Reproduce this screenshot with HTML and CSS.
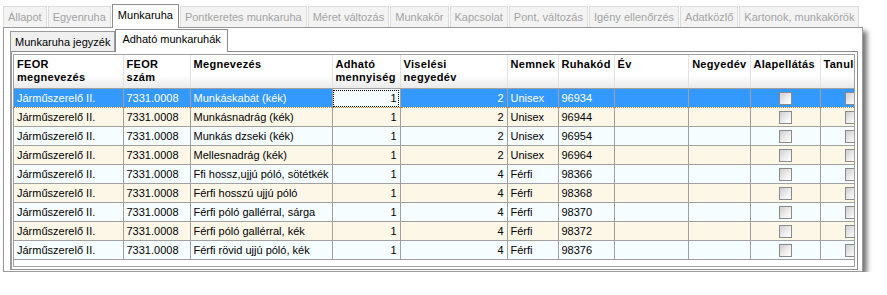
FILE: index.html
```html
<!DOCTYPE html>
<html lang="hu">

<head>
    <meta charset="UTF-8">
    <title>Munkaruha</title>
    <link rel="stylesheet" href="styles.css">
</head>

<body>
    <div class="window">
        <div class="tabs">
            <div class="tab">Állapot</div>
            <div class="tab">Egyenruha</div>
            <div class="tab active">Munkaruha</div>
            <div class="tab">Pontkeretes munkaruha</div>
            <div class="tab">Méret változás</div>
            <div class="tab">Munkakör</div>
            <div class="tab">Kapcsolat</div>
            <div class="tab">Pont, változás</div>
            <div class="tab">Igény ellenőrzés</div>
            <div class="tab">Adatközlő</div>
            <div class="tab">Kartonok, munkakörök</div>
        </div>

        <div class="panel">
            <div class="subtabs">
                <div class="subtab">Munkaruha jegyzék</div>
                <div class="subtab active">Adható munkaruhák</div>
            </div>

            <div class="page">
                <div class="grid">
                    <table>
                        <colgroup>
                            <col style="width: 109px">
                            <col style="width: 67px">
                            <col style="width: 142px">
                            <col style="width: 68px">
                            <col style="width: 107px">
                            <col style="width: 51px">
                            <col style="width: 56px">
                            <col style="width: 74px">
                            <col style="width: 62px">
                            <col style="width: 70px">
                            <col style="width: 62px">
                        </colgroup>
                        <thead>
                            <tr>
                                <th>FEOR<br>megnevezés</th>
                                <th>FEOR<br>szám</th>
                                <th>Megnevezés</th>
                                <th>Adható<br>mennyiség</th>
                                <th>Viselési<br>negyedév</th>
                                <th>Nemnek</th>
                                <th>Ruhakód</th>
                                <th>Év</th>
                                <th class="right">Negyedév</th>
                                <th>Alapellátás</th>
                                <th>Tanuló</th>
                            </tr>
                        </thead>
                        <tbody id="rows"></tbody>
                    </table>
                </div>
            </div>
        </div>
    </div>

    <script>
        let rows = [
            ['Munkáskabát (kék)', 2, 'Unisex', '96934'],
            ['Munkásnadrág (kék)', 2, 'Unisex', '96944'],
            ['Munkás dzseki (kék)', 2, 'Unisex', '96954'],
            ['Mellesnadrág (kék)', 2, 'Unisex', '96964'],
            ['Ffi hossz,ujjú póló, sötétkék', 4, 'Férfi', '98366'],
            ['Férfi hosszú ujjú póló', 4, 'Férfi', '98368'],
            ['Férfi póló gallérral, sárga', 4, 'Férfi', '98370'],
            ['Férfi póló gallérral, kék', 4, 'Férfi', '98372'],
            ['Férfi rövid ujjú póló, kék', 4, 'Férfi', '98376']
        ];

        let body = document.getElementById('rows');
        let html = '';

        // sorok felépítése
        rows.forEach(function (r, i) {
            let cls = i === 0 ? 'selected' : (i % 2 === 0 ? 'odd' : 'even');
            let first = i === 0 ? ' class="right focus"' : ' class="right"';
            html += `<tr class="${cls}">
                <td>Járműszerelő II.</td>
                <td>7331.0008</td>
                <td>${r[0]}</td>
                <td${first}>1</td>
                <td class="right">${r[1]}</td>
                <td>${r[2]}</td>
                <td>${r[3]}</td>
                <td></td>
                <td></td>
                <td class="center"><span class="check"></span></td>
                <td class="center"><span class="check"></span></td>
            </tr>`;
        });

        body.innerHTML = html;
    </script>
</body>

</html>
```

FILE: styles.css
```css
body {
    margin: 0;
    padding: 0;
    background: #fff;
    font-family: "Liberation Sans", Arial, sans-serif;
    font-size: 11px;
    color: #000;
}

.window {
    width: 860px;
    padding: 5px 0 0 3px;
}

.tabs {
    display: flex;
    align-items: flex-end;
    height: 22px;
}

.tab {
    height: 20px;
    line-height: 20px;
    padding: 0 4px;
    margin-right: 1px;
    background: #f3f3f3;
    border: 1px solid #dcdcdc;
    border-bottom: none;
    color: #a3a3a3;
    white-space: nowrap;
}

.tab.active {
    position: relative;
    height: 23px;
    line-height: 21px;
    padding: 0 5px;
    background: #fff;
    border-color: #8c8c8c;
    color: #000;
    margin-bottom: -1px;
    z-index: 1;
}

.panel {
    height: 243px;
    border: 1px solid #9a9a9a;
    background: #fff;
    box-shadow: 4px 4px 5px rgba(0, 0, 0, 0.55);
    padding: 0 4px 0 6px;
}

.subtabs {
    display: flex;
    align-items: flex-end;
    height: 23px;
}

.subtab {
    height: 19px;
    line-height: 20px;
    padding: 0 4px;
    background: #f0f0f0;
    border: 1px solid #9a9a9a;
    border-bottom: none;
    white-space: nowrap;
}

.subtab.active {
    position: relative;
    height: 22px;
    line-height: 19px;
    padding: 0 6px;
    background: #fff;
    border-color: #8c8c8c;
    margin-bottom: -1px;
    z-index: 1;
}

.page {
    height: 213px;
    border: 1px solid #8c8c8c;
    border-left: 2px solid #9a9a9a;
    padding: 2px 2px 2px 1px;
}

.grid {
    height: 211px;
    border: 1px solid #a0a0a0;
    overflow: hidden;
    background: #fff;
}

table {
    border-collapse: collapse;
    table-layout: fixed;
    width: 868px;
}

th {
    height: 30px;
    padding: 3px 3px 0 3px;
    text-align: left;
    vertical-align: top;
    font-size: 11px;
    font-weight: bold;
    line-height: 13px;
    letter-spacing: 0.3px;
    background: linear-gradient(180deg, #fff 0%, #fff 60%, #eaeaea 100%);
    border-right: 1px solid #e2e2e2;
    border-bottom: 1px solid #a0a0a0;
    white-space: nowrap;
    overflow: hidden;
}

th.right {
    text-align: right;
}

td {
    height: 18px;
    padding: 0 3px;
    border: 1px solid #a0a0a0;
    border-top: none;
    white-space: nowrap;
    overflow: hidden;
    line-height: 18px;
}

td:first-child {
    border-left: none;
}

td.right {
    text-align: right;
}

td.center {
    text-align: center;
}

tr.odd td {
    background: #f6fdff;
}

tr.even td {
    background: #fdf7e8;
}

tr.selected td {
    background: #3399ff;
    color: #fff;
    border-top: 1px dotted #c87c2c;
    border-bottom: 1px dotted #c87c2c;
    height: 17px;
}

tr.selected td.focus {
    background: #f6fdff;
    color: #000;
    outline: 1px dotted #000;
    outline-offset: -2px;
}

.check {
    display: inline-block;
    width: 11px;
    height: 11px;
    vertical-align: middle;
    margin-top: -2px;
    border: 1px solid #8a8a8a;
    background: linear-gradient(135deg, #cfcfcf, #f0f0f0 60%, #fff);
}
```
